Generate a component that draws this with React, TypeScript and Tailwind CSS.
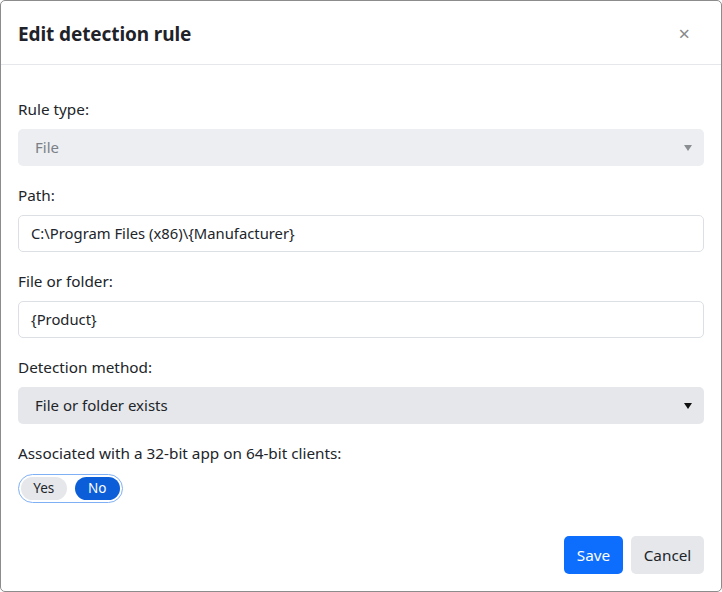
import React from "react";

const font = { fontFamily: '"Noto Sans", "Open Sans", sans-serif' };

function Caret({ color }: { color: string }) {
  return (
    <svg width="8" height="6" viewBox="0 0 8 6" className="shrink-0">
      <path d="M0 0 L8 0 L4 6 Z" fill={color} />
    </svg>
  );
}

export default function App() {
  return (
    <div
      className="w-[722px] h-[592px] bg-white border border-[#8c8c8c] rounded-[5px] flex flex-col text-[#212529] overflow-hidden"
      style={font}
    >
      <div className="h-[64px] shrink-0 flex items-center justify-between pl-[17px] pr-[31px] pt-[3px] border-b border-[#e5e7eb]">
        <h1 className="text-[19px] font-bold tracking-[-0.1px] text-[#1f2329]">Edit detection rule</h1>
        <span className="text-[#8a8a8a] text-[20px] leading-none">×</span>
      </div>
      <div className="flex-1 flex flex-col px-[17px] pt-[34px]">
        <label className="text-[15.3px] leading-[20px] text-[#212529]">Rule type:</label>
        <div className="mt-[10px] h-[37px] rounded-[5px] bg-[#eceef1] flex items-center justify-between pl-[17px] pr-[12px]">
          <span className="text-[15px] text-[#7b8087]">File</span>
          <Caret color="#8a8d91" />
        </div>

        <label className="mt-[19px] text-[15.3px] leading-[20px]">Path:</label>
        <div className="mt-[10px] h-[37px] rounded-[5px] border border-[#dcdfe3] flex items-center pl-[12px]">
          <span className="text-[14.8px]">C:\Program Files (x86)\{"{"}Manufacturer{"}"}</span>
        </div>

        <label className="mt-[19px] text-[15.3px] leading-[20px]">File or folder:</label>
        <div className="mt-[10px] h-[37px] rounded-[5px] border border-[#dcdfe3] flex items-center pl-[12px]">
          <span className="text-[14.8px]">{"{"}Product{"}"}</span>
        </div>

        <label className="mt-[19px] text-[15.3px] leading-[20px]">Detection method:</label>
        <div className="mt-[10px] h-[37px] rounded-[5px] bg-[#e5e7eb] flex items-center justify-between pl-[17px] pr-[12px]">
          <span className="text-[15px] text-[#212529]">File or folder exists</span>
          <Caret color="#111" />
        </div>

        <label className="mt-[19px] text-[15.3px] leading-[20px]">Associated with a 32-bit app on 64-bit clients:</label>
        <div className="mt-[11px] w-[105px] h-[29px] rounded-full border border-[#7fb0f5] flex items-center px-[2px] gap-[8px]">
          <span className="h-[23px] w-[46px] rounded-full bg-[#e5e7eb] flex items-center justify-center text-[13.5px] text-[#212529]">Yes</span>
          <span className="h-[23px] w-[46px] rounded-full bg-[#0b5ed7] flex items-center justify-center text-[13.5px] text-white">No</span>
        </div>

        <div className="mt-auto mb-[17px] flex justify-end gap-[8px]">
          <button className="h-[38px] w-[59px] rounded-[5px] bg-[#0d6efd] text-white text-[15.3px]">Save</button>
          <button className="h-[38px] w-[73px] rounded-[5px] bg-[#e5e7eb] text-[#212529] text-[15.3px]">Cancel</button>
        </div>
      </div>
    </div>
  );
}
